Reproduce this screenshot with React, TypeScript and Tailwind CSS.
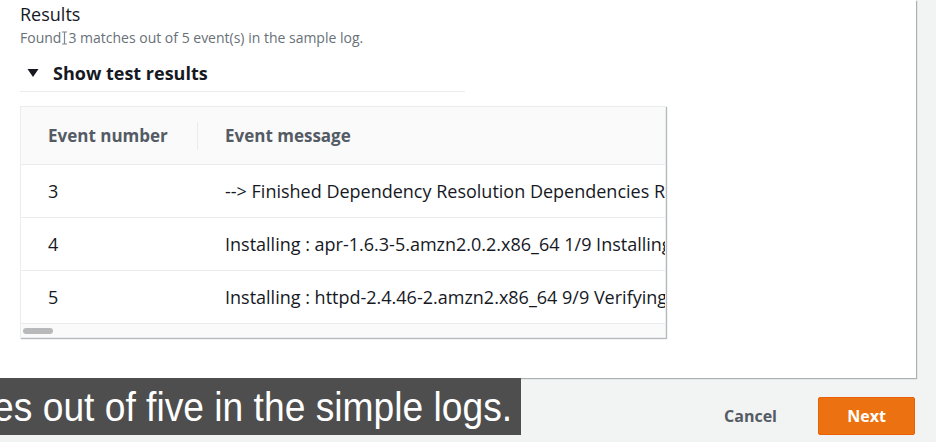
import React from 'react';

const rows = [
  { id: '3', message: '--> Finished Dependency Resolution Dependencies Resolved' },
  { id: '4', message: 'Installing : apr-1.6.3-5.amzn2.0.2.x86_64 1/9 Installing' },
  { id: '5', message: 'Installing : httpd-2.4.46-2.amzn2.x86_64 9/9 Verifying' },
];

function CursorBeam() {
  return (
    <svg width="7" height="14" viewBox="0 0 7 14" className="inline-block align-[-2px]">
      <path d="M1 1h5M1 13h5M3.5 1v12" stroke="#7d8590" strokeWidth="1.2" fill="none" />
    </svg>
  );
}

export default function App() {
  return (
    <div
      className="w-[936px] h-[442px] bg-[#f2f3f3] overflow-hidden flex flex-col"
      style={{ fontFamily: '"Open Sans", "Noto Sans", sans-serif' }}
    >
      {/* results panel */}
      <div className="w-[916px] h-[378px] shrink-0 bg-white shadow-[1px_1px_1px_rgba(0,28,36,0.3)] pl-[20px] pt-[2px]">
        <div className="text-[18px] leading-[24px] text-[#16191f]">Results</div>
        <div className="text-[14px] leading-[20px] text-[#687078] mt-[2px]">
          Found<CursorBeam />3 matches out of 5 event(s) in the sample log.
        </div>

        <div className="w-[445px] mt-[13px] border-b border-[#eaeded] pb-[6px] flex items-center">
          <svg width="12" height="10" viewBox="0 0 12 10" className="ml-[7px] mr-[14px]">
            <path d="M0.5 1h11L6 9z" fill="#16191f" />
          </svg>
          <span className="text-[18px] leading-[24px] font-bold text-[#16191f]">Show test results</span>
        </div>

        {/* test results table */}
        <div className="w-[646px] mt-[14px] border border-[#eaeded] shadow-[1px_1px_1px_rgba(0,28,36,0.3)] overflow-hidden">
          <div className="flex h-[58px] bg-[#fafafa] border-b border-[#eaeded] items-center whitespace-nowrap">
            <div className="w-[177px] shrink-0 pl-[27px] border-r border-[#eaeded] h-[28px] flex items-center text-[17px] font-bold text-[#545b64]">
              Event number
            </div>
            <div className="pl-[27px] text-[17px] font-bold text-[#545b64]">Event message</div>
          </div>
          {rows.map((row) => (
            <div key={row.id} className="flex h-[53px] items-center border-b border-[#eaeded] whitespace-nowrap text-[18px] text-[#16191f]">
              <div className="w-[177px] shrink-0 pl-[27px]">{row.id}</div>
              <div className="pl-[27px]">{row.message}</div>
            </div>
          ))}
          <div className="h-[13px] bg-[#fafafa] flex items-center pl-[2px]">
            <div className="w-[30px] h-[6px] rounded-full bg-[#b7b9bb]" />
          </div>
        </div>
      </div>

      {/* footer */}
      <div className="flex flex-1 items-start">
        <div className="w-[521px] h-[57px] bg-[#4e4e4e] overflow-hidden flex items-center justify-end pr-[9px]">
          <span
            className="text-[40px] leading-none text-white whitespace-nowrap scale-x-[0.93] origin-right"
            style={{ fontFamily: '"Liberation Sans", Arial, sans-serif' }}
          >
            es out of five in the simple logs.
          </span>
        </div>
        <div className="flex-1 flex items-center justify-end pt-[19px] pr-[21px] gap-[41px]">
          <button className="text-[16px] font-bold text-[#545b64]">Cancel</button>
          <button className="w-[97px] h-[38px] bg-[#ec7211] rounded-[2px] border border-[#eb5f07] text-[16px] font-bold text-white">
            Next
          </button>
        </div>
      </div>
    </div>
  );
}
